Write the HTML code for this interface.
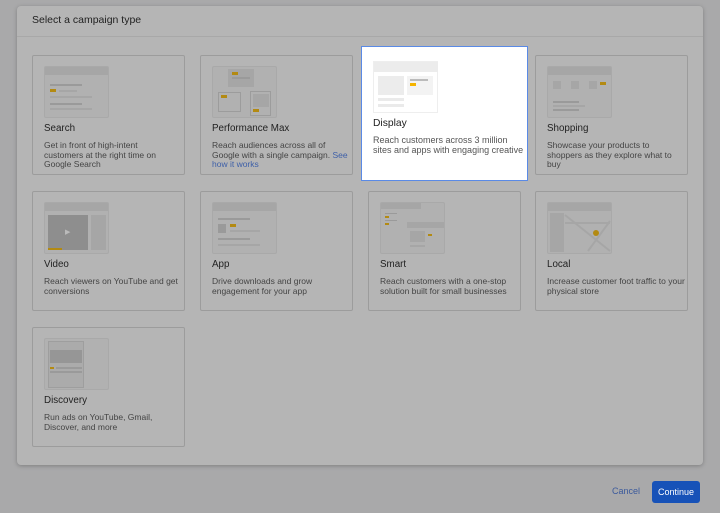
<!DOCTYPE html>
<html><head><meta charset="utf-8"><style>
*{margin:0;padding:0;box-sizing:border-box}
body{width:720px;height:513px;background:#a9a9aa;font-family:"Liberation Sans",sans-serif;position:relative;overflow:hidden}
.dlg{position:absolute;left:17px;top:6px;width:686px;height:459px;background:#b5b5b5;border-radius:4px;box-shadow:0 1px 4px rgba(0,0,0,.25)}
.hdr{position:absolute;left:32px;top:14px;font-size:10.5px;color:#222}
.sep{position:absolute;left:17px;top:36px;width:686px;height:1px;background:#a8a8a8}
.card{position:absolute;width:153px;height:120px;border:1px solid #9c9c9c;border-radius:2px}
.card .th{position:absolute;left:11px;top:10px;width:65px;height:52px;border:1px solid #a9a9a9;background:#b1b1b1;border-radius:2px;overflow:hidden}
.card .t{position:absolute;left:11px;top:67px;font-size:9.8px;color:#222}
.card .d{position:absolute;left:11px;top:85px;width:134px;font-size:8.5px;line-height:9.5px;color:#444}
.b{position:absolute;background:#9a9a9a}
.l{position:absolute;background:#a6a6a6}
.y{position:absolute;background:#b38a12}
.disp{position:absolute;left:361px;top:46px;width:167px;height:135px;background:#fff;border:1px solid #5a8ae6}
.cancel{position:absolute;left:612px;top:486px;font-size:9px;color:#3b5a9c}
.cont{position:absolute;left:652px;top:481px;width:48px;height:22px;background:#1752b8;border-radius:3px;color:#fff;font-size:9px;text-align:center;line-height:22px}
</style></head><body>
<div class="dlg"></div>
<div class="hdr">Select a campaign type</div>
<div class="sep"></div>

<div class="card" style="left:32px;top:55px"><div class="th"><div class="l" style="left:0;top:0;width:64px;height:8px"></div><div class="b" style="left:5px;top:17px;width:32px;height:2px"></div><div class="y" style="left:5px;top:22px;width:6px;height:3px"></div><div class="l" style="left:14px;top:23px;width:18px;height:2px"></div><div class="l" style="left:5px;top:29px;width:42px;height:2px"></div><div class="b" style="left:5px;top:36px;width:32px;height:2px"></div><div class="l" style="left:5px;top:41px;width:42px;height:2px"></div></div><div class="t">Search</div><div class="d">Get in front of high-intent customers at the right time on Google Search</div></div>

<div class="card" style="left:200px;top:55px"><div class="th"><div class="l" style="left:15px;top:2px;width:26px;height:18px"></div><div class="y" style="left:19px;top:5px;width:6px;height:3px"></div><div class="b" style="left:19px;top:10px;width:18px;height:2px"></div><div class="l" style="left:5px;top:25px;width:23px;height:20px;border:1px solid #9c9c9c;background:#b1b1b1"></div><div class="y" style="left:8px;top:28px;width:6px;height:3px"></div><div class="l" style="left:37px;top:24px;width:21px;height:25px;border:1px solid #9c9c9c;background:#b1b1b1"></div><div class="l" style="left:40px;top:27px;width:16px;height:13px"></div><div class="y" style="left:40px;top:42px;width:6px;height:3px"></div></div><div class="t">Performance Max</div><div class="d" style="width:138px">Reach audiences across all of Google with a single campaign. <span style="color:#3d5fa8">See how it works</span></div></div>

<div class="disp"><div style="position:absolute;left:11px;top:14px;width:65px;height:52px;border:1px solid #eee"><div style="position:absolute;left:0;top:0;width:64px;height:10px;background:#ececec"></div><div style="position:absolute;left:4px;top:14px;width:26px;height:19px;background:#ececec"></div><div style="position:absolute;left:33px;top:14px;width:26px;height:19px;background:#f3f3f3"></div><div style="position:absolute;left:36px;top:17px;width:18px;height:2px;background:#bbb"></div><div style="position:absolute;left:36px;top:21px;width:6px;height:3px;background:#f5b400"></div><div style="position:absolute;left:4px;top:36px;width:26px;height:3px;background:#eaeaea"></div><div style="position:absolute;left:4px;top:42px;width:26px;height:3px;background:#eaeaea"></div></div><div style="position:absolute;left:11px;top:71px;font-size:10.3px;color:#222">Display</div><div style="position:absolute;left:11px;top:88px;width:152px;font-size:9px;line-height:10px;color:#555">Reach customers across 3 million sites and apps with engaging creative</div></div>

<div class="card" style="left:535px;top:55px"><div class="th"><div class="l" style="left:0;top:0;width:64px;height:8px"></div><div class="l" style="left:5px;top:14px;width:8px;height:8px"></div><div class="l" style="left:23px;top:14px;width:8px;height:8px"></div><div class="l" style="left:41px;top:14px;width:8px;height:8px"></div><div class="y" style="left:52px;top:15px;width:6px;height:3px"></div><div class="b" style="left:5px;top:34px;width:26px;height:2px"></div><div class="l" style="left:5px;top:38px;width:32px;height:2px"></div><div class="b" style="left:5px;top:42px;width:26px;height:2px"></div></div><div class="t">Shopping</div><div class="d">Showcase your products to shoppers as they explore what to buy</div></div>

<div class="card" style="left:32px;top:191px"><div class="th"><div class="l" style="left:0;top:0;width:64px;height:8px"></div><div style="position:absolute;left:3px;top:12px;width:40px;height:35px;background:#8e8e8e"></div><div class="y" style="left:3px;top:45px;width:14px;height:2px"></div><div class="l" style="left:46px;top:12px;width:15px;height:35px"></div><div style="position:absolute;left:20px;top:25px;color:#bbb;font-size:7px">▶</div></div><div class="t">Video</div><div class="d">Reach viewers on YouTube and get conversions</div></div>

<div class="card" style="left:200px;top:191px"><div class="th"><div class="l" style="left:0;top:0;width:64px;height:8px"></div><div class="b" style="left:5px;top:15px;width:32px;height:2px"></div><div class="b" style="left:5px;top:21px;width:8px;height:9px"></div><div class="y" style="left:17px;top:21px;width:6px;height:3px"></div><div class="l" style="left:17px;top:27px;width:30px;height:2px"></div><div class="b" style="left:5px;top:35px;width:32px;height:2px"></div><div class="l" style="left:5px;top:41px;width:42px;height:2px"></div></div><div class="t">App</div><div class="d">Drive downloads and grow engagement for your app</div></div>

<div class="card" style="left:368px;top:191px"><div class="th"><div class="l" style="left:0;top:0;width:40px;height:6px"></div><div class="b" style="left:4px;top:10px;width:12px;height:1px"></div><div class="y" style="left:4px;top:13px;width:4px;height:2px"></div><div class="b" style="left:4px;top:17px;width:12px;height:1px"></div><div class="y" style="left:4px;top:20px;width:4px;height:2px"></div><div class="l" style="left:26px;top:19px;width:38px;height:6px"></div><div class="l" style="left:29px;top:28px;width:15px;height:11px"></div><div class="y" style="left:47px;top:31px;width:4px;height:2px"></div><div class="l" style="left:29px;top:42px;width:15px;height:2px"></div></div><div class="t">Smart</div><div class="d" style="width:140px">Reach customers with a one-stop solution built for small businesses</div></div>

<div class="card" style="left:535px;top:191px"><div class="th"><div class="l" style="left:0;top:0;width:64px;height:8px"></div><div class="l" style="left:2px;top:10px;width:14px;height:39px"></div><svg style="position:absolute;left:0;top:0" width="64" height="52"><path d="M17 12 L62 48 M40 48 L62 18 M17 20 H62" stroke="#a6a6a6" stroke-width="2" fill="none"/><circle cx="48" cy="30" r="3" fill="#b38a12"/></svg></div><div class="t">Local</div><div class="d" style="width:140px">Increase customer foot traffic to your physical store</div></div>

<div class="card" style="left:32px;top:327px"><div class="th"><div class="l" style="left:3px;top:2px;width:36px;height:47px;border:1px solid #9e9e9e;background:#ababab"></div><div class="b" style="left:5px;top:11px;width:32px;height:13px;background:#969696"></div><div class="y" style="left:5px;top:28px;width:4px;height:2px"></div><div class="b" style="left:11px;top:28px;width:26px;height:2px"></div><div class="b" style="left:5px;top:32px;width:32px;height:2px"></div></div><div class="t">Discovery</div><div class="d">Run ads on YouTube, Gmail, Discover, and more</div></div>

<div class="cancel">Cancel</div>
<div class="cont">Continue</div>
</body></html>
